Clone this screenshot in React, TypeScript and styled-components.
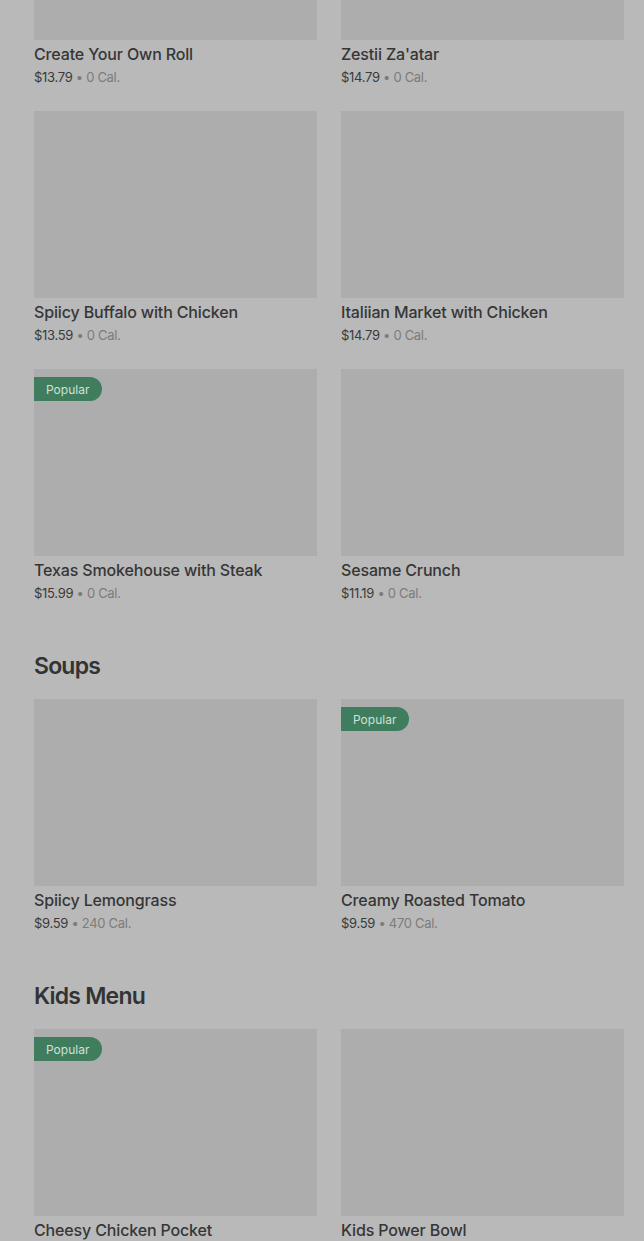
import styled, { createGlobalStyle } from "styled-components";

const GlobalStyle = createGlobalStyle`
  html, body {
    margin: 0;
    padding: 0;
    background: #b9b9b9;
    font-family: Inter, "Noto Sans", sans-serif;
    overflow: hidden;
  }
`;

const Page = styled.div`
  width: 644px;
  height: 1241px;
  overflow: hidden;
  background: #b9b9b9;
`;

const Scroller = styled.div`
  margin-top: -147px;
  padding: 0 20px 0 34px;
`;

const Section = styled.section`
  & + & {
    margin-top: 47px;
  }
`;

const Heading = styled.h2`
  margin: 0 0 17px;
  font-size: 23px;
  line-height: 32px;
  font-weight: 600;
  letter-spacing: -0.8px;
  color: #333333;
`;

const Grid = styled.div`
  display: grid;
  grid-template-columns: 283px 283px;
  column-gap: 24px;
  row-gap: 24px;
`;

const Card = styled.div`
  display: flex;
  flex-direction: column;
`;

const Thumb = styled.div`
  position: relative;
  height: 187px;
  background: #adadad;
`;

const Badge = styled.span`
  position: absolute;
  top: 8px;
  left: 0;
  height: 24px;
  padding: 0 13px 0 12px;
  display: flex;
  align-items: center;
  font-size: 12px;
  color: #cfe2d6;
  background: #3f7d5e;
  border-radius: 0 12px 12px 0;
`;

const Title = styled.div`
  margin-top: 4px;
  font-size: 16px;
  line-height: 20px;
  font-weight: 500;
  letter-spacing: -0.15px;
  color: #363636;
`;

const Meta = styled.div`
  margin-top: 3px;
  font-size: 13px;
  line-height: 20px;
  letter-spacing: -0.3px;
  color: #3a3a3a;
`;

const Cal = styled.span`
  color: #7c7c7c;
`;

type Item = { name: string; price: string; cal: string; popular?: boolean };

const sections: { title?: string; items: Item[] }[] = [
  {
    items: [
      { name: "Create Your Own Roll", price: "$13.79", cal: "0 Cal." },
      { name: "Zestii Za'atar", price: "$14.79", cal: "0 Cal." },
      { name: "Spiicy Buffalo with Chicken", price: "$13.59", cal: "0 Cal." },
      { name: "Italiian Market with Chicken", price: "$14.79", cal: "0 Cal." },
      { name: "Texas Smokehouse with Steak", price: "$15.99", cal: "0 Cal.", popular: true },
      { name: "Sesame Crunch", price: "$11.19", cal: "0 Cal." },
    ],
  },
  {
    title: "Soups",
    items: [
      { name: "Spiicy Lemongrass", price: "$9.59", cal: "240 Cal." },
      { name: "Creamy Roasted Tomato", price: "$9.59", cal: "470 Cal.", popular: true },
    ],
  },
  {
    title: "Kids Menu",
    items: [
      { name: "Cheesy Chicken Pocket", price: "$7.99", cal: "0 Cal.", popular: true },
      { name: "Kids Power Bowl", price: "$7.99", cal: "0 Cal." },
    ],
  },
];

const App = () => (
  <Page>
    <GlobalStyle />
    <Scroller>
      {sections.map((section, i) => (
        <Section key={i}>
          {section.title && <Heading>{section.title}</Heading>}
          <Grid>
            {section.items.map((item) => (
              <Card key={item.name}>
                <Thumb>{item.popular && <Badge>Popular</Badge>}</Thumb>
                <Title>{item.name}</Title>
                <Meta>
                  {item.price} <Cal>• {item.cal}</Cal>
                </Meta>
              </Card>
            ))}
          </Grid>
        </Section>
      ))}
    </Scroller>
  </Page>
);

export default App;
